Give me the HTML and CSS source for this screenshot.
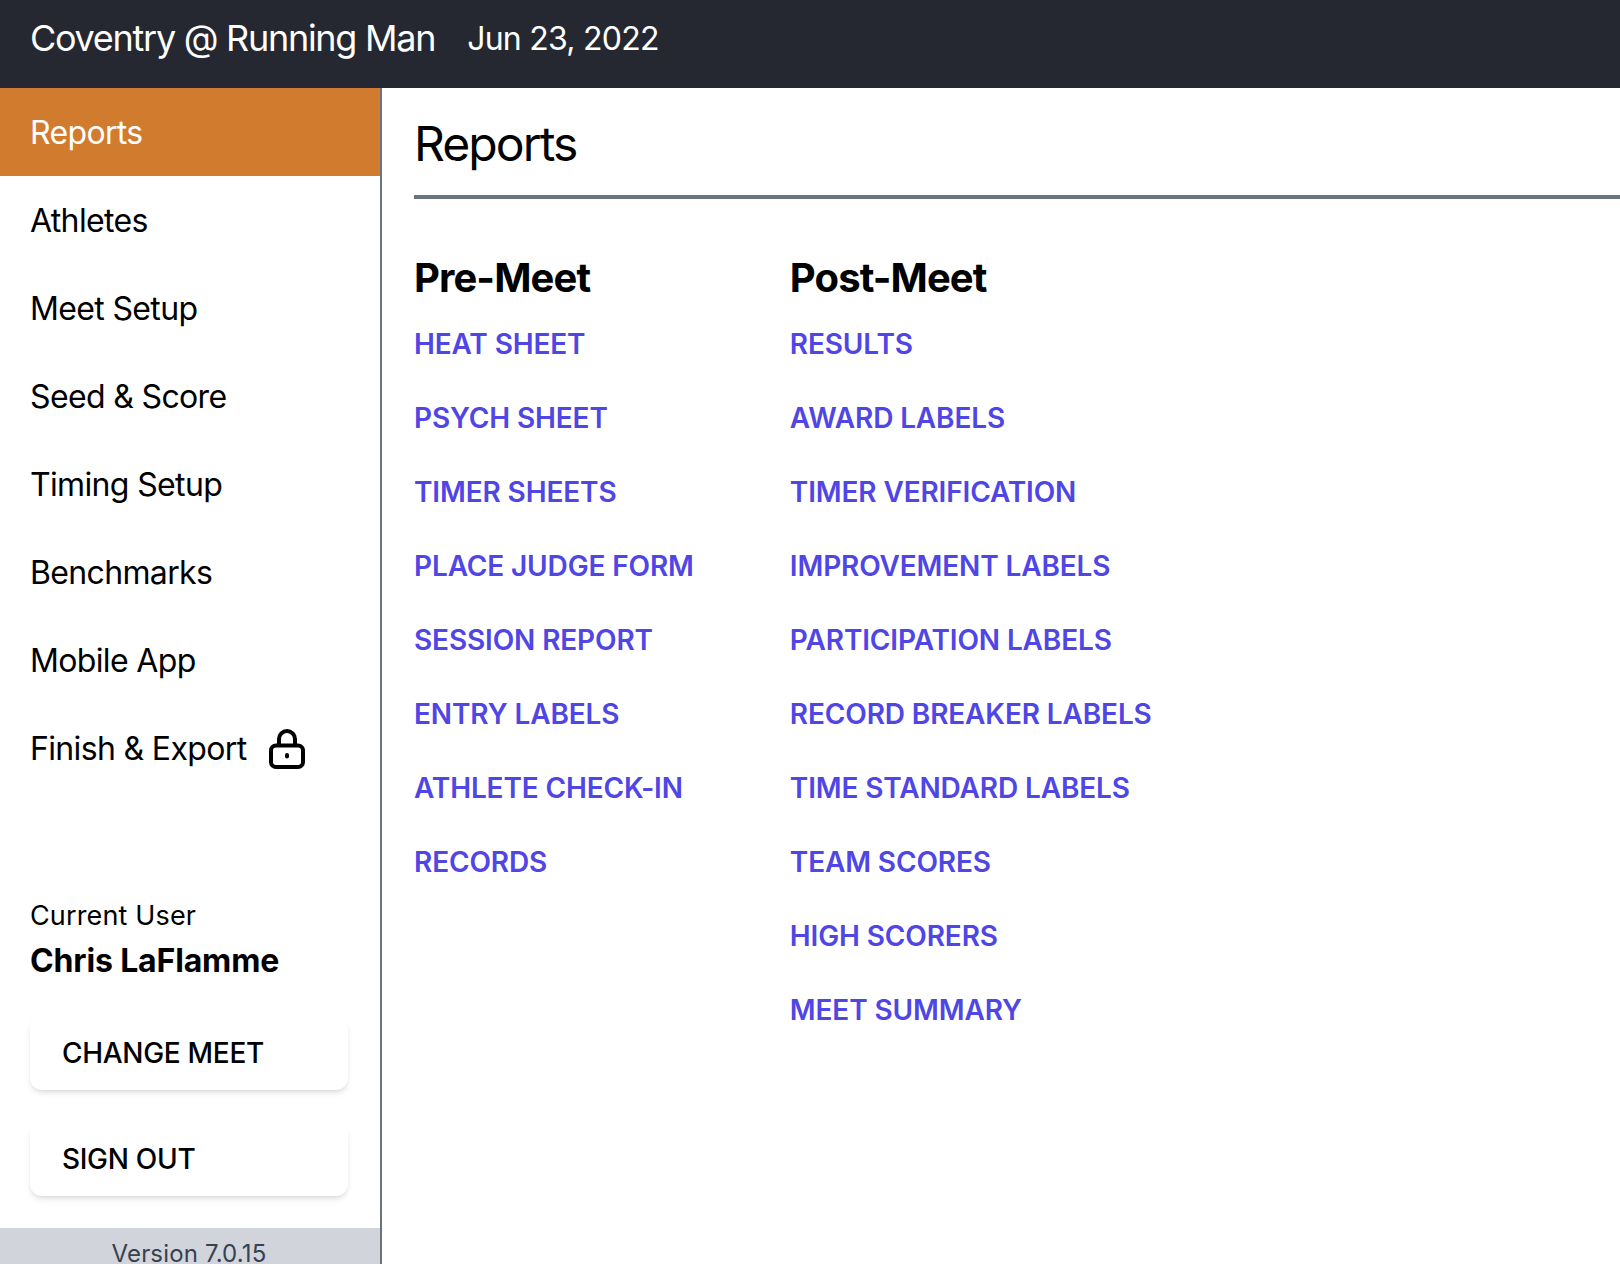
FILE: index.html
```html
<!DOCTYPE html>
<html lang="en">
<head>
<meta charset="utf-8">
<title>Reports</title>
<link rel="stylesheet" href="styles.css">
</head>
<body>
<header class="topbar">
  <span class="meet-name">Coventry @ Running Man</span>
  <span class="meet-date">Jun 23, 2022</span>
</header>
<div class="shell">
  <aside class="sidebar">
    <nav class="nav">
      <a class="nav-item active" href="#">Reports</a>
      <a class="nav-item" href="#">Athletes</a>
      <a class="nav-item" href="#">Meet Setup</a>
      <a class="nav-item" href="#">Seed &amp; Score</a>
      <a class="nav-item" href="#">Timing Setup</a>
      <a class="nav-item" href="#">Benchmarks</a>
      <a class="nav-item" href="#">Mobile App</a>
      <a class="nav-item" href="#">Finish &amp; Export
        <svg class="lock" viewBox="0 0 36 40" fill="none" stroke="currentColor" stroke-width="4" stroke-linecap="round" stroke-linejoin="round">
          <path d="M10 16V10a8 8 0 0 1 16 0v6"/>
          <rect x="2" y="16.500" width="32" height="21.500" rx="5"/>
          <path d="M18 26v1.500"/>
        </svg>
      </a>
    </nav>
    <div class="user">
      <div class="user-label">Current User</div>
      <div class="user-name">Chris LaFlamme</div>
    </div>
    <div class="actions">
      <button class="btn" type="button">CHANGE MEET</button>
      <button class="btn" type="button">SIGN OUT</button>
    </div>
    <footer class="version">Version 7.0.15</footer>
  </aside>
  <main class="content">
    <h1 class="page-title">Reports</h1>
    <div class="columns">
      <section class="column">
        <h2 class="column-title">Pre-Meet</h2>
        <a class="report" href="#">HEAT SHEET</a>
        <a class="report" href="#">PSYCH SHEET</a>
        <a class="report" href="#">TIMER SHEETS</a>
        <a class="report" href="#">PLACE JUDGE FORM</a>
        <a class="report" href="#">SESSION REPORT</a>
        <a class="report" href="#">ENTRY LABELS</a>
        <a class="report" href="#">ATHLETE CHECK-IN</a>
        <a class="report" href="#">RECORDS</a>
      </section>
      <section class="column">
        <h2 class="column-title">Post-Meet</h2>
        <a class="report" href="#">RESULTS</a>
        <a class="report" href="#">AWARD LABELS</a>
        <a class="report" href="#">TIMER VERIFICATION</a>
        <a class="report" href="#">IMPROVEMENT LABELS</a>
        <a class="report" href="#">PARTICIPATION LABELS</a>
        <a class="report" href="#">RECORD BREAKER LABELS</a>
        <a class="report" href="#">TIME STANDARD LABELS</a>
        <a class="report" href="#">TEAM SCORES</a>
        <a class="report" href="#">HIGH SCORERS</a>
        <a class="report" href="#">MEET SUMMARY</a>
      </section>
    </div>
  </main>
</div>
</body>
</html>
```
FILE: styles.css
```css
* { box-sizing: border-box; }
html, body { margin: 0; height: 100%; }
body {
  display: flex;
  flex-direction: column;
  height: 100vh;
  overflow: hidden;
  background: #fff;
  color: #000;
  font-family: Inter, "Liberation Sans", sans-serif;
}
.topbar {
  flex: none;
  height: 88px;
  background: #252831;
  color: #fff;
  display: flex;
  align-items: flex-start;
  gap: 32px;
  padding: 16px 30px 0;
  font-size: 36px;
  line-height: 45px;
  letter-spacing: -1.28px;
}
.meet-date { font-size: 32px; letter-spacing: -0.75px; }
.shell { flex: 1; display: flex; min-height: 0; }
.sidebar {
  flex: none;
  width: 382px;
  border-right: 2px solid #6b7280;
  display: flex;
  flex-direction: column;
}
.nav { display: flex; flex-direction: column; }
.nav-item {
  height: 88px;
  padding: 1px 30px 0;
  display: flex;
  align-items: center;
  gap: 23px;
  font-size: 32px;
  letter-spacing: -0.65px;
  color: #000;
  text-decoration: none;
}
.nav-item.active { background: #d17b2e; color: #fff; }
.lock { width: 36px; height: 40px; flex: none; }
.user { padding: 106px 30px 0; }
.user-label { font-size: 27px; line-height: 36px; letter-spacing: 0.15px; }
.user-name { font-size: 32px; line-height: 44px; font-weight: 700; margin-top: 5px; letter-spacing: -0.15px; }
.actions {
  display: flex;
  flex-direction: column;
  gap: 32px;
  padding: 33px 32px 32px 30px;
}
.btn {
  height: 74px;
  border: 0;
  border-radius: 12px;
  background: #fff;
  box-shadow: 0 4px 6px -1px rgba(0,0,0,.1), 0 2px 4px -2px rgba(0,0,0,.1);
  padding: 0 32px;
  text-align: left;
  font-family: inherit;
  font-size: 28px;
  font-weight: 500;
  letter-spacing: -0.3px;
  color: #000;
}
.version {
  flex: none;
  height: 80px;
  padding: 10px 2px 0 0;
  background: #d1d5db;
  color: #374151;
  text-align: center;
  font-size: 24px;
  line-height: 32px;
  letter-spacing: 0.15px;
}
.content { flex: 1; min-width: 0; padding: 0 0 0 32px; }
.page-title {
  margin: 0;
  height: 111px;
  border-bottom: 4px solid #6b7280;
  font-size: 48px;
  line-height: 64px;
  letter-spacing: -1.9px;
  padding-top: 24px;
  font-weight: 400;
}
.columns { display: flex; gap: 96px; padding-top: 53px; }
.column { display: flex; flex-direction: column; }
.column-title { margin: 0 0 18px; font-size: 40px; line-height: 52px; font-weight: 700; letter-spacing: -0.9px; }
.report {
  height: 74px;
  padding-top: 4px;
  font-size: 28px;
  line-height: 36px;
  font-weight: 600;
  letter-spacing: -0.13px;
  color: #4f46e5;
  text-decoration: none;
}
```
